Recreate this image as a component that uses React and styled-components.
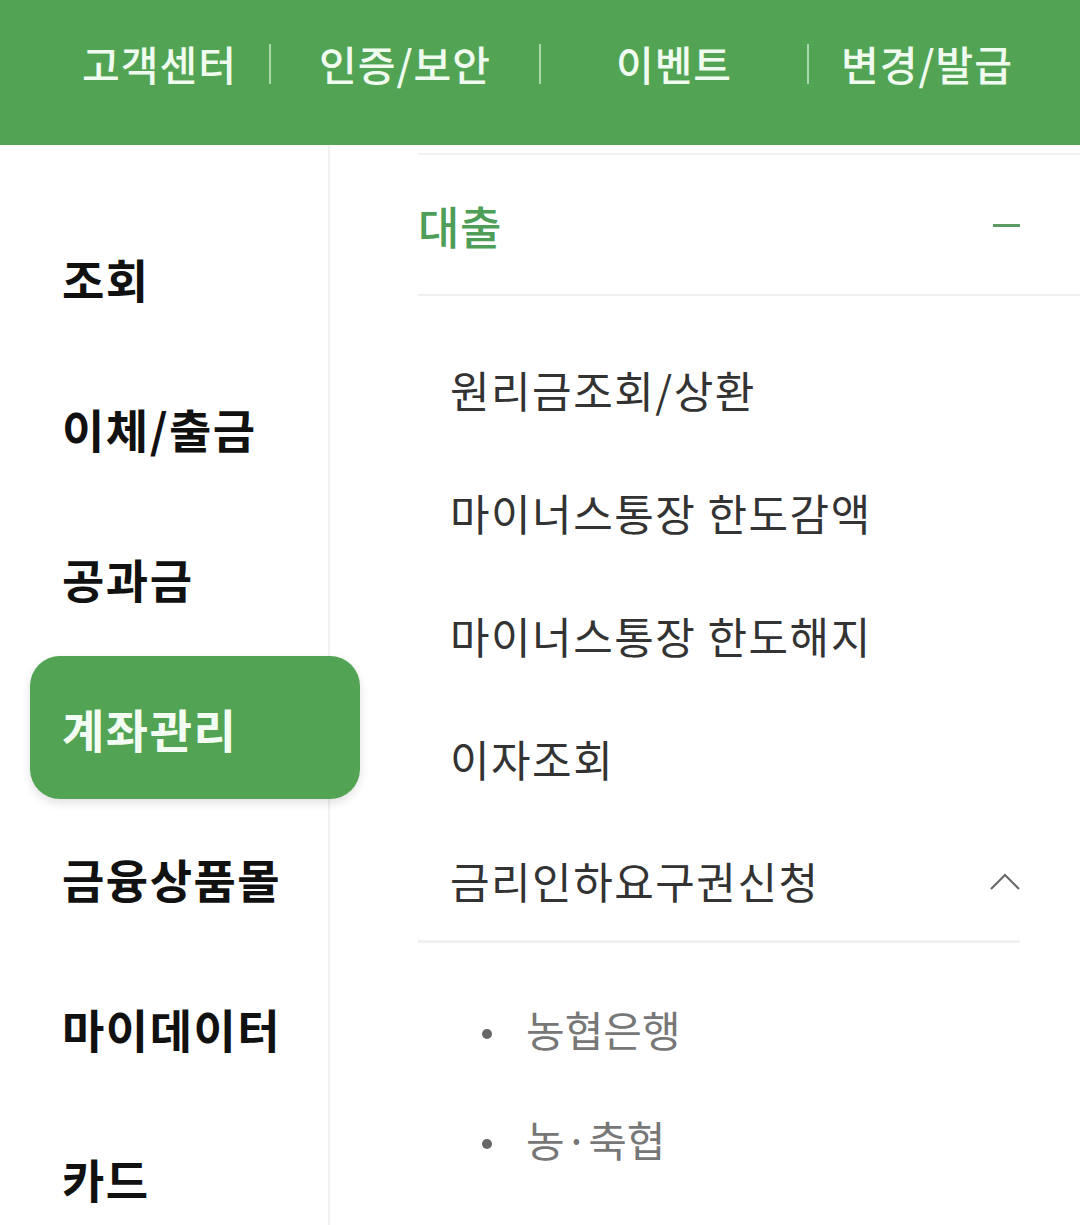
import React from "react";
import styled, { createGlobalStyle } from "styled-components";

const Global = createGlobalStyle`
  html, body { margin: 0; padding: 0; background: #ffffff; }
  body { font-family: "Noto Sans CJK KR", "Noto Sans", sans-serif; }
  * { box-sizing: border-box; }
`;

const Page = styled.div`
  width: 1080px;
  height: 1225px;
  overflow: hidden;
  background: #fff;
`;

const Header = styled.header`
  height: 145px;
  background: #52a454;
  display: flex;
  align-items: center;
  padding-bottom: 18px;
`;

const Tab = styled.div`
  width: ${(p) => p.$w}px;
  display: flex;
  justify-content: center;
  padding-left: ${(p) => p.$pl || 0}px;
  padding-right: ${(p) => p.$pr || 0}px;
  font-size: 41px;
  font-weight: 500;
  line-height: 1;
  letter-spacing: 1px;
  color: #effbee;
  white-space: nowrap;
`;

const Sep = styled.span`
  width: 2px;
  height: 40px;
  background: #a9d8aa;
  flex: none;
`;

const Body = styled.div`
  display: flex;
  align-items: stretch;
  height: 1080px;
`;

const Sidebar = styled.nav`
  width: 330px;
  flex: none;
  border-right: 2px solid #f1f1f1;
  padding-top: 61px;
  display: flex;
  flex-direction: column;
  gap: 7px;
`;

const SideItem = styled.div`
  flex: none;
  width: 330px;
  height: 143px;
  margin-left: 30px;
  padding-left: 32px;
  display: flex;
  align-items: center;
  border-radius: 30px;
  font-size: 46px;
  font-weight: 700;
  line-height: 1;
  letter-spacing: 1.5px;
  color: ${(p) => (p.$active ? "#f3fcf2" : "#111")};
  background: ${(p) => (p.$active ? "#52a454" : "transparent")};
  box-shadow: ${(p) => (p.$active ? "0 4px 10px rgba(0,0,0,0.12)" : "none")};
  position: relative;
  z-index: 1;
`;

const Panel = styled.section`
  flex: 1;
  padding-top: 8px;
  padding-left: 88px;
  display: flex;
  flex-direction: column;
`;

const SectionHead = styled.div`
  flex: none;
  height: 143px;
  border-top: 2px solid #f2f2f2;
  border-bottom: 2px solid #f0f0f0;
  display: flex;
  align-items: center;
  justify-content: space-between;
  padding-right: 60px;
  padding-top: 2px;
`;

const SectionTitle = styled.h2`
  margin: 0;
  font-size: 45px;
  font-weight: 500;
  line-height: 1;
  letter-spacing: 0.5px;
  color: #4f9e58;
`;

const Minus = styled.span`
  width: 27px;
  height: 3px;
  background: #5a9c62;
`;

const SubList = styled.div`
  margin-right: 60px;
  padding-top: 32px;
  display: flex;
  flex-direction: column;
`;

const SubItem = styled.div`
  flex: none;
  height: 123px;
  padding-left: 32px;
  display: flex;
  align-items: center;
  justify-content: space-between;
  font-size: 43px;
  font-weight: 400;
  line-height: 1;
  letter-spacing: 1.5px;
  color: #333;
  border-bottom: ${(p) => (p.$open ? "3px solid #f0f0f0" : "none")};
  white-space: nowrap;
`;

const BulletList = styled.ul`
  list-style: none;
  margin: 0;
  padding: 31px 0 0 63px;
  display: flex;
  flex-direction: column;
`;

const BulletItem = styled.li`
  flex: none;
  height: 110px;
  display: flex;
  align-items: center;
  gap: 34px;
  font-size: 42px;
  line-height: 1;
  letter-spacing: 0;
  color: #777;
  &::before {
    content: "";
    width: 10px;
    height: 10px;
    border-radius: 50%;
    background: #666;
    flex: none;
    margin-top: 10px;
    margin-left: 1px;
  }
`;

const ChevronUp = () => (
  <svg width="32" height="20" viewBox="0 0 32 20" style={{ marginRight: -1, marginTop: 4 }}>
    <polyline points="2,17 16,3 30,17" fill="none" stroke="#666" strokeWidth="2" />
  </svg>
);

const tabs = [
  { label: "고객센터", w: 269, pl: 50 },
  { label: "인증/보안", w: 268, pl: 0 },
  { label: "이벤트", w: 266, pl: 0 },
  { label: "변경/발급", w: 270, pr: 34 },
];

const side = ["조회", "이체/출금", "공과금", "계좌관리", "금융상품몰", "마이데이터", "카드"];

const subs = ["원리금조회/상환", "마이너스통장 한도감액", "마이너스통장 한도해지", "이자조회"];

export default function App() {
  return (
    <Page>
      <Global />
      <Header>
        {tabs.map((t, i) => (
          <React.Fragment key={t.label}>
            {i > 0 && <Sep />}
            <Tab $w={t.w} $pl={t.pl} $pr={t.pr}>
              {t.label}
            </Tab>
          </React.Fragment>
        ))}
      </Header>
      <Body>
        <Sidebar>
          {side.map((s) => (
            <SideItem key={s} $active={s === "계좌관리"}>
              {s}
            </SideItem>
          ))}
        </Sidebar>
        <Panel>
          <SectionHead>
            <SectionTitle>대출</SectionTitle>
            <Minus />
          </SectionHead>
          <SubList>
            {subs.map((s) => (
              <SubItem key={s}>{s}</SubItem>
            ))}
            <SubItem $open>
              금리인하요구권신청
              <ChevronUp />
            </SubItem>
          </SubList>
          <BulletList>
            <BulletItem>농협은행</BulletItem>
            <BulletItem>농·축협</BulletItem>
          </BulletList>
        </Panel>
      </Body>
    </Page>
  );
}
